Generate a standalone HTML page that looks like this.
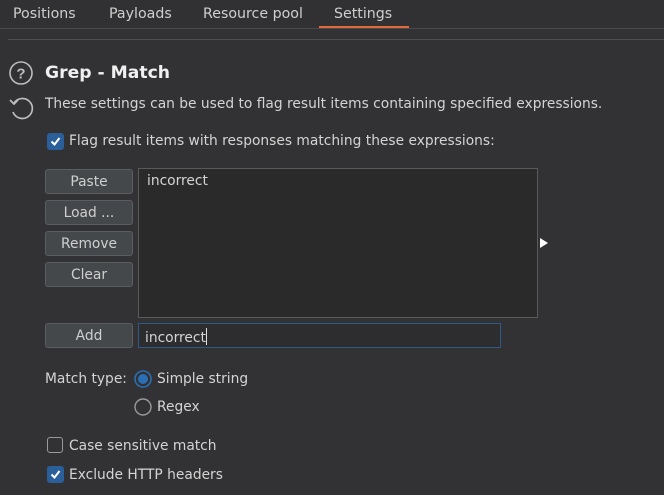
<!DOCTYPE html>
<html><head><style>
body{margin:0;width:664px;height:495px;background:#323234;font-family:"DejaVu Sans","Liberation Sans",sans-serif;color:#d4d4d4;position:relative;overflow:hidden;font-size:13.8px}
.a{position:absolute;white-space:nowrap}
.tab{position:absolute;top:6px;font-size:14.2px;color:#cfcfcf}
.btn{position:absolute;left:45px;width:86px;height:23px;border:1px solid #5a5d61;border-radius:3px;background:#45484b;color:#cfcfcf;text-align:center;line-height:24px;font-size:13.8px}
.cb{position:absolute;width:15px;height:15px;border-radius:3px}
.on{background:#2a5f9a;border:1px solid #2a5f9a}
.off{border:1.5px solid #9a9a9a;width:14px;height:14px}
</style></head><body>
<div style="position:absolute;left:0;top:0;width:664px;height:28px;background:#313133"></div>
<div class="tab" style="left:13px">Positions</div>
<div class="tab" style="left:109px">Payloads</div>
<div class="tab" style="left:203px">Resource pool</div>
<div class="tab" style="left:334px">Settings</div>
<div class="a" style="left:319px;top:26px;width:90px;height:2px;background:#e2693a"></div>
<div class="a" style="left:0;top:28px;width:664px;height:1px;background:#4a4a4c"></div>
<div class="a" style="left:8px;top:39px;width:656px;height:1px;background:#505052"></div>
<svg class="a" style="left:9px;top:61px" width="25" height="25" viewBox="0 0 25 25"><circle cx="12" cy="12" r="11" fill="none" stroke="#bdbdbd" stroke-width="1.6"/><text x="12" y="17.5" text-anchor="middle" font-size="15" font-weight="bold" fill="#bdbdbd" font-family="Liberation Sans">?</text></svg>
<svg class="a" style="left:8px;top:96px" width="26" height="26" viewBox="0 0 26 26"><path d="M6 7 A10 10 0 1 1 5 16" fill="none" stroke="#bdbdbd" stroke-width="1.7"/><path d="M2 4 L6 8 L10 4" fill="none" stroke="#bdbdbd" stroke-width="1.7"/></svg>
<div class="a" style="left:45px;top:63px;font-size:17.2px;font-weight:bold;color:#f0f0f0">Grep - Match</div>
<div class="a" style="left:45px;top:96px">These settings can be used to flag result items containing specified expressions.</div>
<div class="cb on" style="left:47px;top:133px"><svg width="15" height="15"><path d="M3.5 7.5 L6.5 10.5 L11.5 4" fill="none" stroke="#fff" stroke-width="2"/></svg></div>
<div class="a" style="left:69px;top:133px">Flag result items with responses matching these expressions:</div>
<div class="btn" style="top:169px">Paste</div>
<div class="btn" style="top:200px">Load ...</div>
<div class="btn" style="top:231px">Remove</div>
<div class="btn" style="top:262px">Clear</div>
<div class="btn" style="top:323px">Add</div>
<div class="a" style="left:138px;top:168px;width:398px;height:148px;background:#2a2a2a;border:1px solid #5a5a5a"></div>
<div class="a" style="left:147px;top:173px">incorrect</div>
<div class="a" style="left:540px;top:238px;width:0;height:0;border-left:8px solid #fff;border-top:5px solid transparent;border-bottom:5px solid transparent"></div>
<div class="a" style="left:138px;top:323px;width:361px;height:23px;background:#2d2d2f;border:1px solid #2f5a85"></div>
<div class="a" style="left:145px;top:328px">incorrect<span style="display:inline-block;width:1px;height:17px;background:#ddd;vertical-align:-3px"></span></div>
<div class="a" style="left:45px;top:371px">Match type:</div>
<svg class="a" style="left:134px;top:370px" width="18" height="18"><circle cx="9" cy="9" r="8" fill="none" stroke="#2a6fb5" stroke-width="1.6"/><circle cx="9" cy="9" r="5" fill="#2a6fb5"/></svg>
<div class="a" style="left:157px;top:371px">Simple string</div>
<svg class="a" style="left:134px;top:398px" width="18" height="18"><circle cx="9" cy="9" r="8" fill="none" stroke="#9a9a9a" stroke-width="1.4"/></svg>
<div class="a" style="left:157px;top:399px">Regex</div>
<div class="cb off" style="left:47px;top:437px"></div>
<div class="a" style="left:69px;top:438px">Case sensitive match</div>
<div class="cb on" style="left:47px;top:466px"><svg width="15" height="15"><path d="M3.5 7.5 L6.5 10.5 L11.5 4" fill="none" stroke="#fff" stroke-width="2"/></svg></div>
<div class="a" style="left:69px;top:467px">Exclude HTTP headers</div>
</body></html>
